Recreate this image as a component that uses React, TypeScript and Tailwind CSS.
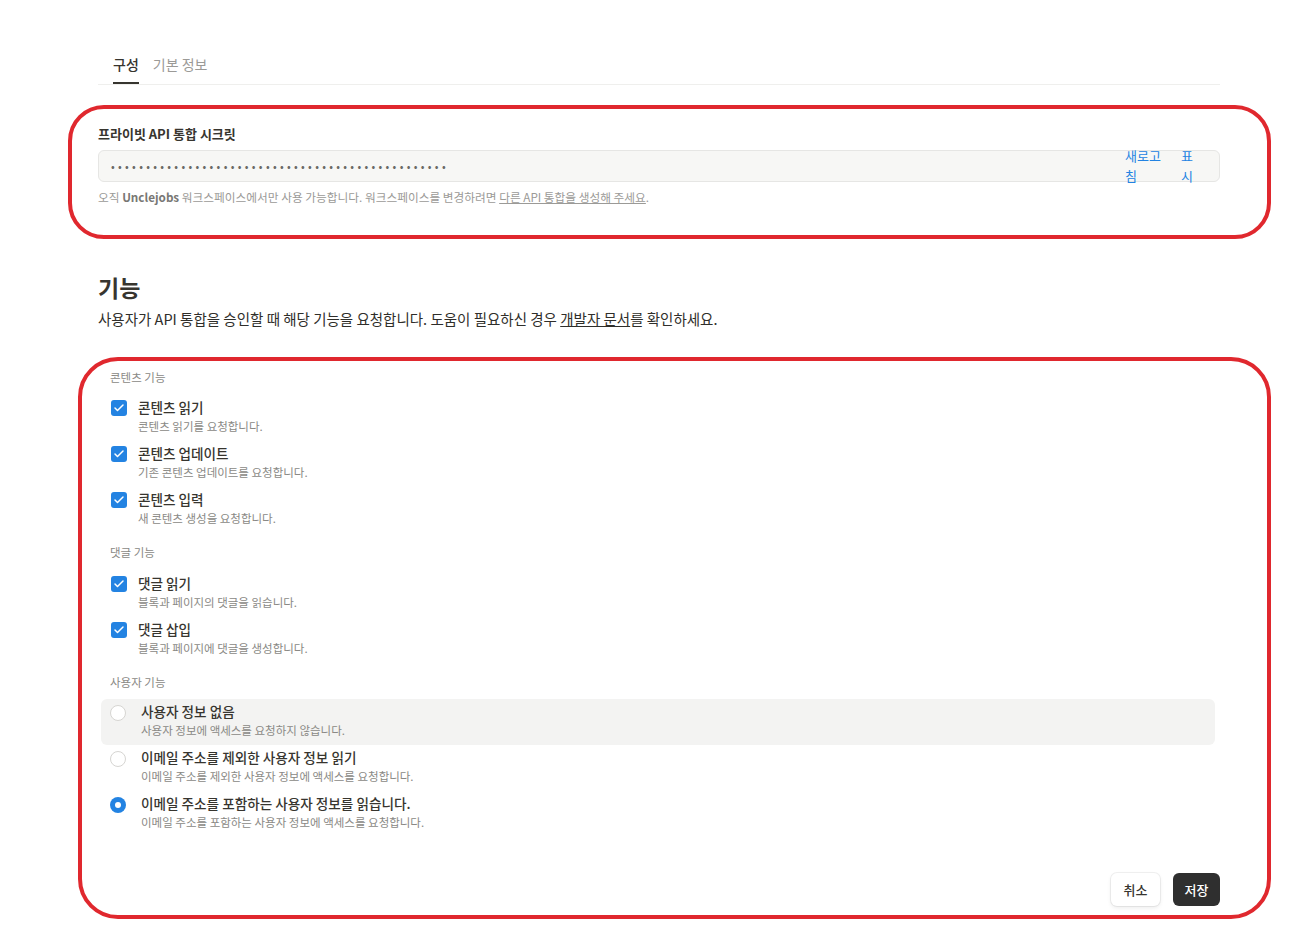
import { Check } from "lucide-react";

type Option = { title: string; desc: string; checked?: boolean; highlight?: boolean };

const contentOptions: Option[] = [
  { title: "콘텐츠 읽기", desc: "콘텐츠 읽기를 요청합니다.", checked: true },
  { title: "콘텐츠 업데이트", desc: "기존 콘텐츠 업데이트를 요청합니다.", checked: true },
  { title: "콘텐츠 입력", desc: "새 콘텐츠 생성을 요청합니다.", checked: true },
];

const commentOptions: Option[] = [
  { title: "댓글 읽기", desc: "블록과 페이지의 댓글을 읽습니다.", checked: true },
  { title: "댓글 삽입", desc: "블록과 페이지에 댓글을 생성합니다.", checked: true },
];

const userOptions: Option[] = [
  { title: "사용자 정보 없음", desc: "사용자 정보에 액세스를 요청하지 않습니다.", highlight: true },
  { title: "이메일 주소를 제외한 사용자 정보 읽기", desc: "이메일 주소를 제외한 사용자 정보에 액세스를 요청합니다." },
  { title: "이메일 주소를 포함하는 사용자 정보를 읽습니다.", desc: "이메일 주소를 포함하는 사용자 정보에 액세스를 요청합니다.", checked: true },
];

const SectionLabel = ({ children }: { children: string }) => (
  <p className="pl-3 text-[11.5px] leading-4 text-[#8a8985]">{children}</p>
);

const CheckRow = ({ option }: { option: Option }) => (
  <div className="flex h-[46px] items-start gap-[11px] pl-[13px] pt-[1px]">
    <div className="mt-[3px] flex h-[16px] w-[16px] items-center justify-center rounded-[3px] bg-[#2383e2]">
      <Check size={12} strokeWidth={3} className="text-white" />
    </div>
    <div>
      <p className="text-[13.6px] font-medium leading-5 text-[#37352f]">{option.title}</p>
      <p className="mt-[1px] text-[11.5px] leading-4 text-[#8a8985]">{option.desc}</p>
    </div>
  </div>
);

const RadioRow = ({ option }: { option: Option }) => (
  <div
    className={`flex h-[46px] items-start gap-[15px] rounded-md pl-[9px] pt-[2px] ${
      option.highlight ? "bg-[#f3f3f2]" : ""
    }`}
  >
    <div
      className={`mt-[4px] flex h-[16px] w-[16px] items-center justify-center rounded-full ${
        option.checked ? "bg-[#2383e2]" : "border border-[#d6d5d2] bg-white"
      }`}
    >
      {option.checked && <div className="h-[6px] w-[6px] rounded-full bg-white" />}
    </div>
    <div>
      <p className="text-[13.6px] font-medium leading-5 text-[#37352f]">{option.title}</p>
      <p className="mt-[1px] text-[11.5px] leading-4 text-[#8a8985]">{option.desc}</p>
    </div>
  </div>
);

export default function App() {
  return (
    <div
      className="relative min-h-[952px] bg-white pl-[98px] pr-[72px] pt-[54px]"
      style={{ fontFamily: '"Noto Sans CJK KR", "Noto Sans", sans-serif' }}
    >
      {/* tabs */}
      <div className="flex gap-[14px] border-b border-[#efefed] px-[15px]">
        <div className="border-b-2 border-[#37352f] pb-[8px] text-[14px] font-medium leading-5 text-[#37352f]">
          구성
        </div>
        <div className="pb-[8px] text-[14px] leading-5 text-[#9b9a97]">기본 정보</div>
      </div>

      {/* secret */}
      <div className="mt-[39px]">
        <p className="text-[13px] font-semibold leading-5 text-[#37352f]">프라이빗 API 통합 시크릿</p>
        <div className="mt-[6px] flex h-[32px] items-center rounded-md border border-[#e6e6e4] bg-[#f7f7f5] pl-3 pr-6">
          <span className="flex-1 text-[11px] tracking-[3.3px] text-[#6b6a66]">
            {"••••••••••••••••••••••••••••••••••••••••••••••••"}
          </span>
          <span className="w-[40px] text-[13px] leading-[20px] text-[#2383e2]">새로고침</span>
          <span className="ml-[16px] w-[14px] text-[13px] leading-[20px] text-[#2383e2]">표시</span>
        </div>
        <p className="mt-[7px] text-[11.7px] leading-4 text-[#9b9a97]">
          오직 <span className="font-semibold text-[#787774]">Unclejobs</span> 워크스페이스에서만 사용 가능합니다.
          워크스페이스를 변경하려면 <span className="underline">다른 API 통합을 생성해 주세요</span>.
        </p>
      </div>

      {/* capabilities */}
      <div className="mt-[68px]">
        <h2 className="text-[23px] font-semibold leading-7 text-[#37352f]">기능</h2>
        <p className="mt-[8px] text-[14.5px] leading-5 text-[#2f2e2a]">
          사용자가 API 통합을 승인할 때 해당 기능을 요청합니다. 도움이 필요하신 경우{" "}
          <span className="underline">개발자 문서</span>를 확인하세요.
        </p>
      </div>

      <div className="mt-[40px]">
        <SectionLabel>콘텐츠 기능</SectionLabel>
        <div className="mt-[11px]">
          {contentOptions.map((o) => (
            <CheckRow key={o.title} option={o} />
          ))}
        </div>

        <div className="mt-[10px]">
          <SectionLabel>댓글 기능</SectionLabel>
        </div>
        <div className="mt-[12px]">
          {commentOptions.map((o) => (
            <CheckRow key={o.title} option={o} />
          ))}
        </div>

        <div className="mt-[10px]">
          <SectionLabel>사용자 기능</SectionLabel>
        </div>
        <div className="ml-[3px] mr-[5px] mt-[9px]">
          {userOptions.map((o) => (
            <RadioRow key={o.title} option={o} />
          ))}
        </div>

        <div className="mt-[36px] flex justify-end gap-[13px]">
          <button className="h-[33px] w-[49px] rounded-md bg-white text-[13px] font-medium text-[#37352f] shadow-[0_0_0_1px_rgba(15,15,15,0.06),0_2px_4px_rgba(15,15,15,0.08)]">
            취소
          </button>
          <button className="h-[33px] w-[47px] rounded-md bg-[#2f2f2f] text-[13px] font-medium text-white">
            저장
          </button>
        </div>
      </div>

      {/* annotation outlines */}
      <div className="pointer-events-none absolute left-[68px] top-[105px] h-[134px] w-[1203px] rounded-[36px] border-[4px] border-[#e0282e]" />
      <div className="pointer-events-none absolute left-[78px] top-[357px] h-[562px] w-[1193px] rounded-[40px] border-[4px] border-[#e0282e]" />
    </div>
  );
}
